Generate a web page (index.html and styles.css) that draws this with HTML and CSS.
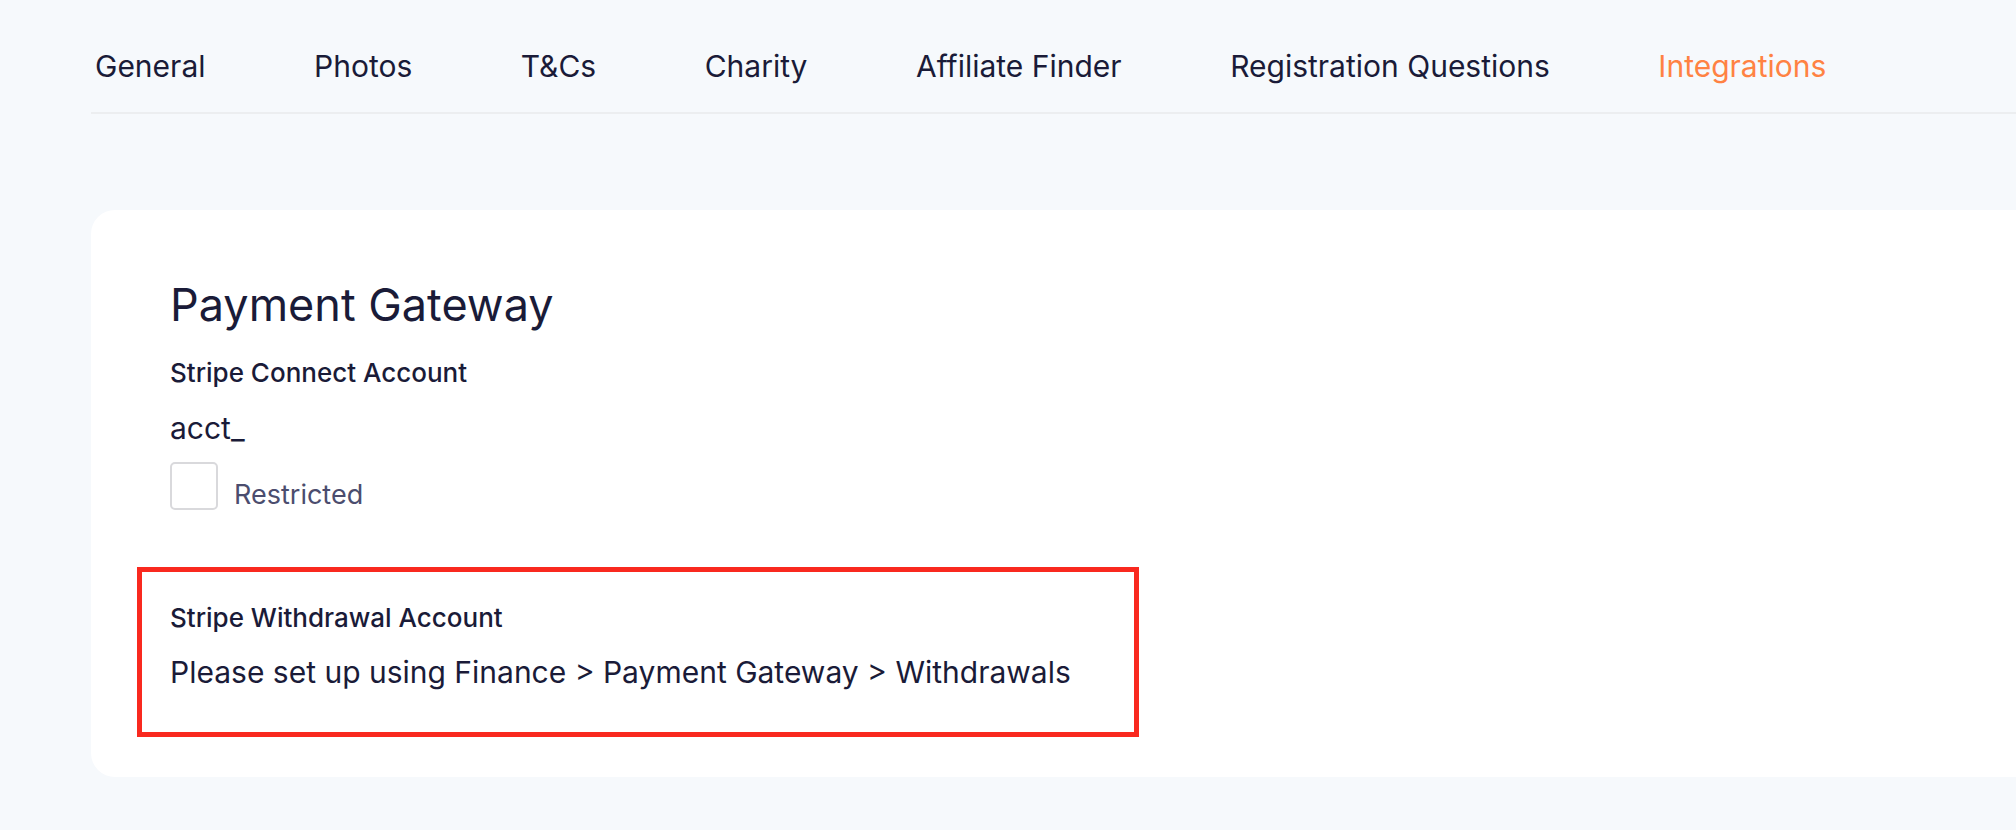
FILE: index.html
```html
<!DOCTYPE html>
<html lang="en">
  <head>
    <meta charset="UTF-8" />
    <meta name="viewport" content="width=device-width, initial-scale=1.0" />
    <title>Integrations</title>
    <link rel="stylesheet" href="styles.css">
  </head>
  <body>
    <div id="page">
      <ul id="tabs">
        <li>General</li>
        <li>Photos</li>
        <li>T&amp;Cs</li>
        <li>Charity</li>
        <li>Affiliate Finder</li>
        <li>Registration Questions</li>
        <li class="tab-sel">Integrations</li>
      </ul>

      <div class="card">
        <h2 class="card-title">Payment Gateway</h2>

        <div class="field">
          <div class="field-label">Stripe Connect Account</div>
          <div class="field-value">acct_</div>
          <label class="check-row">
            <span class="check-box"></span>
            <span class="check-text">Restricted</span>
          </label>
        </div>

        <div class="field field-marked">
          <div class="field-label">Stripe Withdrawal Account</div>
          <div class="field-value">Please set up using Finance &gt; Payment Gateway &gt; Withdrawals</div>
        </div>
      </div>
    </div>
  </body>
</html>
```

FILE: styles.css
```css
* {
  margin: 0;
  padding: 0;
  box-sizing: border-box;
}
li {
  list-style: none;
}

body {
  background: #f6f9fc;
  color: #1a1b38;
  font-family: Inter, "Noto Sans", sans-serif;
}

#page {
  margin-left: 91px;
}

#tabs {
  display: flex;
  gap: 108.5px;
  padding: 44px 0 23px 4px;
  border-bottom: 2px solid #eceef0;
}

#tabs li {
  font-size: 30px;
  line-height: 45px;
  cursor: pointer;
}

#tabs .tab-sel {
  color: #ff8243;
}

.card {
  margin-top: 96px;
  background: #fff;
  border-radius: 24px 0 0 24px;
  padding: 65px 0 40px 79px;
}

.card-title {
  font-size: 45px;
  line-height: 60px;
  font-weight: 400;
  margin-bottom: 20px;
}

.field-label {
  font-size: 26px;
  line-height: 36px;
  font-weight: 500;
}

.field-value {
  font-size: 30px;
  line-height: 42px;
  margin-top: 16px;
}

.check-row {
  display: flex;
  align-items: flex-end;
  gap: 16px;
  margin-top: 13px;
}

.check-box {
  width: 48px;
  height: 48px;
  border: 2px solid #d9d9dc;
  border-radius: 5px;
  background: #fff;
}

.check-text {
  font-size: 27px;
  line-height: 30px;
  color: #4b4d6e;
}

/* red outline marking the withdrawal block */
.field-marked {
  width: 1002px;
  margin: 57px 0 0 -33px;
  padding: 28px 0 39px 28px;
  border: 5px solid #f9291f;
}

.field-marked .field-value {
  margin-top: 15px;
}
```
